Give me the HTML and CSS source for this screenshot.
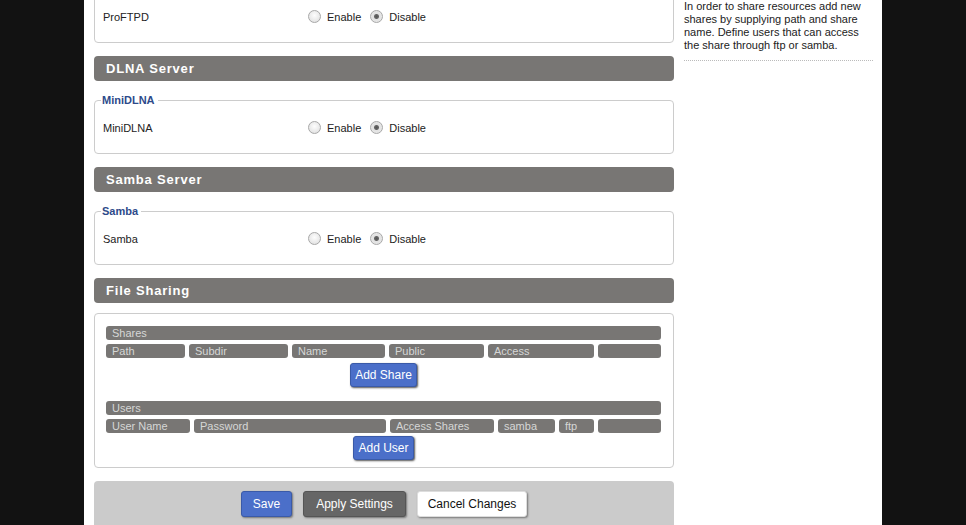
FILE: index.html
```html
<!DOCTYPE html>
<html>
<head>
<meta charset="utf-8">
<link rel="stylesheet" href="styles.css">
</head>
<body>
<div class="page">
  <div class="main">
    <fieldset class="box first">
      <div class="setting">
        <div class="label">ProFTPD</div>
        <label class="opt"><input type="radio" name="ftp"> Enable</label>
        <label class="opt"><input type="radio" name="ftp" checked> Disable</label>
      </div>
    </fieldset>

    <h2 class="bar">DLNA Server</h2>
    <fieldset class="box">
      <legend>MiniDLNA</legend>
      <div class="setting">
        <div class="label">MiniDLNA</div>
        <label class="opt"><input type="radio" name="dlna"> Enable</label>
        <label class="opt"><input type="radio" name="dlna" checked> Disable</label>
      </div>
    </fieldset>

    <h2 class="bar">Samba Server</h2>
    <fieldset class="box">
      <legend>Samba</legend>
      <div class="setting">
        <div class="label">Samba</div>
        <label class="opt"><input type="radio" name="smb"> Enable</label>
        <label class="opt"><input type="radio" name="smb" checked> Disable</label>
      </div>
    </fieldset>

    <h2 class="bar tight">File Sharing</h2>
    <div class="sharebox">
      <div class="tbar">Shares</div>
      <div class="cols shares">
        <div class="cell">Path</div>
        <div class="cell">Subdir</div>
        <div class="cell">Name</div>
        <div class="cell">Public</div>
        <div class="cell">Access</div>
        <div class="cell"></div>
      </div>
      <div class="center"><button class="btn blue add">Add Share</button></div>

      <div class="tbar users">Users</div>
      <div class="cols userscols">
        <div class="cell">User Name</div>
        <div class="cell">Password</div>
        <div class="cell">Access Shares</div>
        <div class="cell">samba</div>
        <div class="cell">ftp</div>
        <div class="cell"></div>
      </div>
      <div class="center last"><button class="btn blue add">Add User</button></div>
    </div>

    <div class="submit">
      <button class="btn blue big save">Save</button>
      <button class="btn grey big">Apply Settings</button>
      <button class="btn white big">Cancel Changes</button>
    </div>
  </div>

  <div class="side">
    <p>In order to share resources add new shares by supplying path and share name. Define users that can access the share through ftp or samba.</p>
  </div>
</div>
</body>
</html>
```

FILE: styles.css
```css
html, body {
  margin: 0;
  padding: 0;
  height: 100%;
  overflow: hidden;
}
body {
  background: #121212;
  font-family: "Liberation Sans", Arial, sans-serif;
  font-size: 11px;
  color: #222;
}
.page {
  width: 798px;
  margin: 0 auto;
  background: #fff;
  min-height: 100%;
  display: flex;
  gap: 10px;
  padding-left: 10px;
  box-sizing: border-box;
}
.main {
  width: 580px;
  margin-top: -11px;
}
.box {
  margin: 0;
  padding: 0 9px 0 8px;
  border: 1px solid #ccc;
  border-radius: 4px;
}
.box legend {
  color: #2d4a8a;
  font-weight: bold;
  font-size: 11px;
  padding: 0 3px 0 1px;
  margin-left: -2px;
  line-height: 12px;
}
.setting {
  display: flex;
  align-items: center;
  height: 50px;
  margin-top: -3px;
}
.first .setting {
  margin-top: 2px;
}
.label {
  width: 205px;
  color: #222;
}
.opt {
  display: flex;
  align-items: center;
  gap: 6px;
  margin-right: 9px;
  color: #222;
}
.opt input {
  appearance: none;
  -webkit-appearance: none;
  width: 13px;
  height: 13px;
  margin: 0;
  border: 1px solid #a8a8a8;
  border-radius: 50%;
  background: radial-gradient(circle at 50% 40%, #fdfdfd 0, #e6e6e6 70%, #d4d4d4 100%);
  box-sizing: border-box;
  position: relative;
  top: -1px;
}
.opt input:checked {
  background: radial-gradient(circle, #555 0, #666 2px, #e2e2e2 3px, #eaeaea 100%);
}
.bar {
  margin: 13px 0 13px;
  height: 25px;
  line-height: 25px;
  background: #787674;
  border-radius: 4px;
  color: #fff;
  font-size: 13px;
  font-weight: bold;
  letter-spacing: 0.8px;
  padding-left: 12px;
}
.bar.tight {
  margin-bottom: 10px;
}
.sharebox {
  border: 1px solid #ccc;
  border-radius: 4px;
  padding: 12px 12px 7px 11px;
}
.tbar, .cell {
  background: #787674;
  border-radius: 3px;
  color: #d6d6d6;
  height: 14px;
  line-height: 14px;
  padding-left: 6px;
  font-size: 11px;
  white-space: nowrap;
  overflow: hidden;
}
.cols {
  display: grid;
  gap: 4px;
  margin-top: 4px;
}
.shares {
  grid-template-columns: 79px 99px 93px 95px 106px 63px;
}
.userscols {
  grid-template-columns: 84px 192px 104px 57px 35px 63px;
}
.tbar.users {
  margin-top: 14px;
}
.center {
  display: flex;
  justify-content: center;
  margin-top: 5px;
}
.center.last {
  margin-top: 3px;
}
.btn {
  font-family: "Liberation Sans", Arial, sans-serif;
  font-size: 12px;
  border-radius: 3px;
  cursor: pointer;
  box-sizing: border-box;
}
.blue {
  background: #4b6fc9;
  color: #fff;
  border: 1px solid #3a5aa8;
}
.add {
  height: 24px;
  padding: 0 4px;
  box-shadow: 1px 1px 2px #555;
}
.submit {
  margin-top: 13px;
  background: #cbcbcb;
  border-radius: 4px 4px 0 0;
  height: 60px;
  padding-top: 10px;
  box-sizing: border-box;
  display: flex;
  justify-content: center;
  gap: 11px;
}
.big {
  height: 26px;
  box-shadow: 1px 1px 2px #777;
}
.save {
  width: 51px;
}
.grey {
  background: #666;
  color: #fff;
  border: 1px solid #555;
  width: 103px;
}
.white {
  background: #fff;
  color: #111;
  border: 1px solid #ddd;
  width: 110px;
}
.side {
  width: 189px;
  margin-top: 0;
}
.side p {
  margin: 0;
  padding-bottom: 8px;
  border-bottom: 1px dotted #bbb;
  line-height: 13px;
  color: #222;
}
```
